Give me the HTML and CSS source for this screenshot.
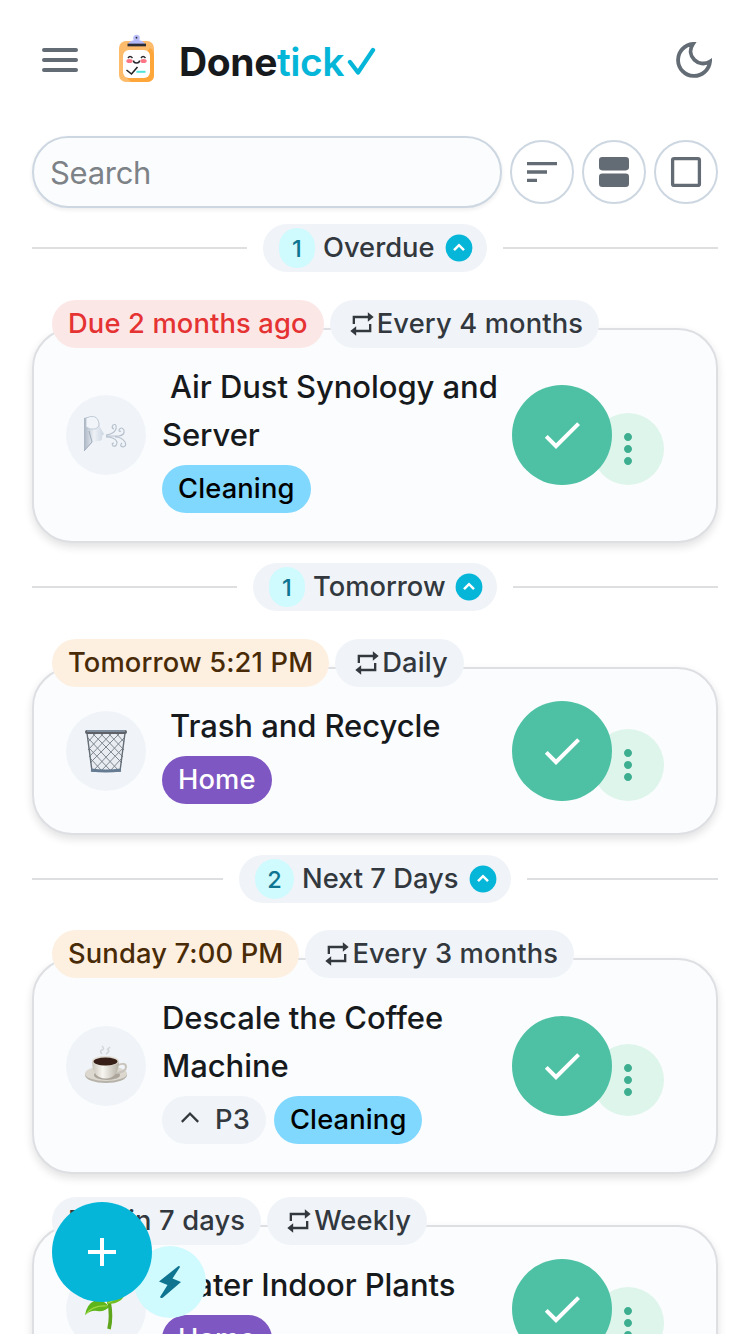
FILE: index.html
```html
<!DOCTYPE html>
<html lang="en">
<head>
<meta charset="utf-8">
<title>Donetick</title>
<link rel="stylesheet" href="styles.css">
</head>
<body>
<svg width="0" height="0" class="defs">
  <symbol id="repeat" viewBox="0 0 24 24"><path fill="currentColor" d="M6 7h11v3l5-4-5-4v3H4v7h2zM18 17H7v-3l-5 4 5 4v-3h13v-7h-2z"/></symbol>
  <symbol id="check" viewBox="0 0 24 24"><path fill="currentColor" d="M9 16.17 4.83 12l-1.42 1.41L9 19 21 7l-1.41-1.41z"/></symbol>
  <symbol id="up" viewBox="0 0 24 24"><path fill="currentColor" d="m12 8-6 6 1.100 1.100L12 10.200l4.900 4.900L18 14z"/></symbol>
  <symbol id="dots" viewBox="0 0 24 24"><path fill="currentColor" d="M12 8c1.1 0 2-.9 2-2s-.9-2-2-2-2 .9-2 2 .9 2 2 2m0 2c-1.1 0-2 .9-2 2s.9 2 2 2 2-.9 2-2-.9-2-2-2m0 6c-1.1 0-2 .9-2 2s.9 2 2 2 2-.9 2-2-.9-2-2-2"/></symbol>
  <symbol id="collapse" viewBox="0 0 28 28"><circle cx="14" cy="14" r="13.4" fill="#06b6d8"/><path d="m9 16.2 5-5 5 5" fill="none" stroke="#fff" stroke-width="2.5"/></symbol>
</svg>

<header class="topbar">
  <svg class="menu" viewBox="0 0 36 26"><path d="M2 3h32M2 13h32M2 23h32" stroke="#636b74" stroke-width="4" stroke-linecap="round"/></svg>
  <svg class="logo" viewBox="0 0 40 50">
    <rect x="2" y="7" width="35" height="41" rx="7" fill="#fdbb6c"/>
    <path d="M33 14q4 2 4 8v19q0 7-7 7H14l-4-4z" fill="#ffa63a"/>
    <rect x="6" y="16" width="27" height="28" rx="6" fill="#fff"/>
    <circle cx="19.500" cy="4" r="2.200" fill="none" stroke="#b9bdf9" stroke-width="2.200"/><circle cx="19.500" cy="3.800" r="1" fill="#222640"/>
    <path d="M11 10q2-4 8.500-4t8.500 4z" fill="#b4b9fa"/><path d="M10.500 11h18.500" stroke="#2c2c34" stroke-width="2.700"/>
    <ellipse cx="12.500" cy="27" rx="3.200" ry="2" fill="#fb7584"/><ellipse cx="26.500" cy="27" rx="3.200" ry="2" fill="#fb7584"/>
    <path d="M11 24q2-3 4.500 0M24 24q2-3 4.500 0M16.500 26.500q0 2.500 3 2.500t3-2.500" fill="none" stroke="#26262c" stroke-width="1.400"/>
    <path d="m9.500 36 5 4 6-7" fill="none" stroke="#222" stroke-width="1.600"/><path d="M19.500 37.800h9" stroke="#4ee4dc" stroke-width="2"/>
  </svg>
  <div class="brand">Done<span>tick</span></div>
  <svg class="brandcheck" viewBox="0 0 30 30"><path d="m3 16 8 10.500L26 4" fill="none" stroke="#06b6d8" stroke-width="4.300" stroke-linecap="round" stroke-linejoin="round"/></svg>
  <svg class="moon" viewBox="0 0 36 36"><path d="M17 2A16 16 0 1 0 34 19.500C23 26.500 9 14 17 2Z" fill="none" stroke="#636b74" stroke-width="3.800"/></svg>
</header>

<div class="toolbar">
  <div class="search">Search</div>
  <button class="tool"><svg viewBox="0 0 40 40"><path fill="#636b74" d="M5 10h30v3.300H5zm0 8.300h20v3.400H5zm0 8.400h10V30H5z"/></svg></button>
  <button class="tool"><svg viewBox="0 0 40 40"><rect x="5" y="5" width="30" height="13.400" rx="3.300" fill="#636b74"/><rect x="5" y="21.600" width="30" height="13.400" rx="3.300" fill="#636b74"/></svg></button>
  <button class="tool"><svg viewBox="0 0 40 40"><rect x="6.600" y="6.600" width="26.800" height="26.800" rx="1.500" fill="none" stroke="#636b74" stroke-width="3.300"/></svg></button>
</div>

<main>
  <div class="divider"><div class="group g1"><b>1</b><span>Overdue</span><svg><use href="#collapse"/></svg></div></div>
  <section class="task first">
    <div class="chips"><div class="chip late">Due 2 months ago</div><div class="chip"><svg><use href="#repeat"/></svg>Every 4 months</div></div>
    <article class="card">
      <div class="avatar"><svg viewBox="0 0 44 44">
        <defs><linearGradient id="face"><stop stop-color="#aab5c3"/><stop offset=".5" stop-color="#eef2f7"/><stop offset="1" stop-color="#ccd5e0"/></linearGradient></defs>
        <path d="M0 5q10-3 14 2 2 3 2 7l4 7-2 2q1 5-3 5-5 0-7 2l-8 8z" fill="url(#face)"/>
        <path d="M2 5q9-4 12 2 3 7-3 9-5 1-9-2z" fill="#f1f4f9" stroke="#b5c0cd" stroke-width=".8"/><path d="m0 38 8-9-3-11" fill="none" stroke="#a0abba" stroke-width="1"/>
        <g fill="none" stroke="#b7c1cd" stroke-width="1.200"><path d="M22 22q8-1 10-6 1-6-3-4-2 3 1 4M22 23h13q6-1 5-6-3-4-5 0 0 2 2 1M22 24q9 0 11 5 0 5-4 4-2-3 1-3M31 24q7 0 10 5 2 4-2 5-4-1-1-4"/></g>
      </svg></div>
      <div class="body"><h2 class="indent">Air Dust Synology and Server</h2><div class="tags"><span class="tag cleaning">Cleaning</span></div></div>
      <div class="actions"><button class="done"><svg><use href="#check"/></svg></button><button class="more"><svg><use href="#dots"/></svg></button></div>
    </article>
  </section>

  <div class="divider"><div class="group g2"><b>1</b><span>Tomorrow</span><svg><use href="#collapse"/></svg></div></div>
  <section class="task short">
    <div class="chips"><div class="chip soon">Tomorrow 5:21 PM</div><div class="chip"><svg><use href="#repeat"/></svg>Daily</div></div>
    <article class="card">
      <div class="avatar"><svg viewBox="0 0 44 44">
        <path d="M3 3h38l-5 39H8z" fill="#e9edf2"/>
        <g fill="none" stroke="#7d858e" stroke-width="1"><path d="m4 9 31 33M5 19l22 23M6 29l12 13M8 4l30 30M16 4l23 24M24 4l16 17M32 4l8 9M40 9 9 42M39 19 17 42M38 29 26 42M36 4 6 34M28 4 5 28M20 4 4 21M12 4 4 13"/></g>
        <path d="M3 4 8 42h28l5-38" fill="none" stroke="#656d76" stroke-width="1.400"/><path d="M7 41q15 2 30 0" stroke="#657b92" stroke-width="3" fill="none"/>
        <rect x="1" y="1" width="42" height="4" rx="2" fill="#5e6268"/><path d="M3 2h38" stroke="#9fb7d0"/>
      </svg></div>
      <div class="body"><h2 class="indent">Trash and Recycle</h2><div class="tags"><span class="tag home">Home</span></div></div>
      <div class="actions"><button class="done"><svg><use href="#check"/></svg></button><button class="more"><svg><use href="#dots"/></svg></button></div>
    </article>
  </section>

  <div class="divider"><div class="group g3"><b>2</b><span>Next 7 Days</span><svg><use href="#collapse"/></svg></div></div>
  <section class="task week">
    <div class="chips"><div class="chip soon">Sunday 7:00 PM</div><div class="chip"><svg><use href="#repeat"/></svg>Every 3 months</div></div>
    <article class="card">
      <div class="avatar"><svg viewBox="0 0 44 44">
        <defs><linearGradient id="cup"><stop stop-color="#c9c4ba"/><stop offset=".4" stop-color="#f8f6f1"/><stop offset="1" stop-color="#b6b0a5"/></linearGradient></defs>
        <ellipse cx="22" cy="31" rx="21" ry="8" fill="#b7b2a9"/><ellipse cx="22" cy="29.500" rx="21" ry="7.500" fill="#dcd8d0"/><ellipse cx="23" cy="31" rx="13" ry="5" fill="#aaa49a"/>
        <path d="M34 21q8-3 8 2 0 5-10 6" fill="none" stroke="#c9c4bb" stroke-width="2"/>
        <path d="M8 17q0 12 7 16 7 3 13 0 7-4 7-16z" fill="url(#cup)"/><ellipse cx="21.500" cy="17" rx="13.500" ry="5" fill="#e3ded5"/><ellipse cx="21.500" cy="17.500" rx="12" ry="4" fill="#382018"/>
        <path d="M18 10q-3-3 0-4t0-4M22 10q5-3 1-5M24 5l2-2" fill="none" stroke="#d4d7da" stroke-width="1.600"/>
      </svg></div>
      <div class="body"><h2>Descale the Coffee Machine</h2><div class="tags"><span class="tag prio"><svg><use href="#up"/></svg>P3</span><span class="tag cleaning">Cleaning</span></div></div>
      <div class="actions"><button class="done"><svg><use href="#check"/></svg></button><button class="more"><svg><use href="#dots"/></svg></button></div>
    </article>
  </section>

  <section class="task last">
    <div class="chips"><div class="chip">Due in 7 days</div><div class="chip"><svg><use href="#repeat"/></svg>Weekly</div></div>
    <article class="card">
      <div class="avatar"><svg viewBox="0 0 44 44">
        <path d="M25 42q3-12 0-28" fill="none" stroke="#5ea51c" stroke-width="3.600"/>
        <path d="M25 20Q19 11 10 14 3 17 1 28q6-5 12-4 8 1 12-4z" fill="#5fb51c"/><path d="M2 27q7-9 21-8" fill="none" stroke="#9dd845" stroke-width="1.200"/>
        <path d="M23 17q1-12 19-14-2 14-19 14z" fill="#6fbf20"/><path d="M24 16q9-3 17-12" fill="none" stroke="#a8df4c"/>
      </svg></div>
      <div class="body"><h2>Water Indoor Plants</h2><div class="tags"><span class="tag home">Home</span></div></div>
      <div class="actions"><button class="done"><svg><use href="#check"/></svg></button><button class="more"><svg><use href="#dots"/></svg></button></div>
    </article>
  </section>
</main>

<div class="fabs">
  <button class="add"><svg viewBox="0 0 28 28"><path d="M14 0v28M0 14h28" stroke="#fff" stroke-width="4"/></svg></button>
  <button class="quick"><svg viewBox="0 0 22 32"><path d="M19.500 0 0 15.500l8.500 3.500L1 31q1 2 3 .5L22 16l-8.500-3.500L21 1q0-1-1.500-1z" fill="#0e7490"/></svg></button>
</div>
</body>
</html>
```
FILE: styles.css
```css
* { box-sizing: border-box; }
body { margin: 0; height: 1334px; overflow: hidden; background: #fff; color: #171a1c; font: 500 27.3px/42px Inter, sans-serif; position: relative; }
button { border: 0; padding: 0; font: inherit; display: flex; align-items: center; justify-content: center; }
svg { display: block; flex: none; }
.defs { position: absolute; }

.topbar { height: 120px; padding: 0 38px 0 42px; display: flex; align-items: center; }
.menu { width: 36px; height: 26px; }
.logo { width: 40px; height: 50px; margin: 0 0 3px 39px; }
.brand { width: 168px; margin: 3px 0 0 22px; font-size: 39px; line-height: 60px; font-weight: 700; letter-spacing: -0.4px; white-space: nowrap; }
.brand span { color: #06b6d8; font-weight: 600; letter-spacing: -0.5px; }
.brandcheck { width: 30px; height: 30px; margin: 2px 0 0 0; }
.moon { width: 36px; height: 36px; margin-left: auto; }

.toolbar { display: flex; align-items: center; gap: 8px; padding: 16px 32px 0; }
.search { width: 470px; height: 72px; padding: 0 16px; border: 2px solid #cdd7e1; border-radius: 36px; background: #fbfcfe; box-shadow: 0 2px 4px rgba(21, 21, 21, .08); color: #7d8287; font-size: 31px; line-height: 70px; font-weight: 400; letter-spacing: -0.3px; }
.tool { width: 64px; height: 64px; border: 2px solid #cdd7e1; border-radius: 50%; background: #fff; }
.tool svg { width: 40px; height: 40px; }

main { padding: 16px 32px 0; }
.divider { display: flex; align-items: center; gap: 16px; height: 48px; }
.divider::before, .divider::after { content: ""; flex: 1; height: 2px; background: #dedfe1; }
.group { display: flex; align-items: center; height: 48px; padding: 0 14px 0 16px; border-radius: 24px; background: #f0f4f8; color: #32383e; }
.g1 { width: 224px; }
.g2 { width: 244px; }
.g3 { width: 272px; }
.group b { width: 36px; height: 40px; border-radius: 20px; background: #cffafe; color: #0e7490; font-size: 23.500px; line-height: 41px; font-weight: 500; text-align: center; }
.g3 b { width: 39px; }
.group span { margin-left: 8px; }
.group svg { width: 28px; height: 28px; margin-left: auto; }

.task { padding: 28px 0 20px; }
.week { padding: 27px 0 24px; }
.last { padding-top: 0; }
.chips { display: flex; gap: 6px; height: 28px; padding-left: 20px; position: relative; z-index: 1; }
.chip, .tag { display: flex; align-items: center; height: 48px; padding: 0 16px; border-radius: 24px; white-space: nowrap; background: #f0f4f8; color: #32383e; letter-spacing: 0.15px; }
.chip { flex: none; }
.chip svg { width: 28px; height: 28px; margin: 0 1px 0 2px; }
.late { background: #fce7e7; color: #e53232; }
.soon { background: #fdf0e1; color: #492b08; }
.card { display: flex; align-items: center; padding: 34px 52px 28px 32px; border: 2px solid #dddfe3; border-radius: 40px; background: #fbfcfe; box-shadow: 0 4px 8px rgba(21, 21, 21, .13); }
.first .card { padding-top: 33px; }
.avatar { width: 80px; height: 80px; margin-bottom: 6px; border-radius: 50%; background: #f0f4f8; display: flex; align-items: center; justify-content: center; }
.avatar svg { width: 44px; height: 44px; }
.body { width: 350px; margin-left: 16px; }
.short .body { margin-top: -1px; margin-bottom: 1px; }
.week .card { padding-bottom: 28px; }
.week { padding-bottom: 23px; }
h2 { margin: 0; font-size: 31px; line-height: 48px; font-weight: 500; letter-spacing: -0.07px; }
.indent { text-indent: 8px; }
.last h2 { text-indent: 4px; }
.tags { display: flex; gap: 8px; margin-top: 6px; }
.cleaning { background: #80d8ff; color: #000; }
.home { background: #7e57c2; color: #fff; }
.prio svg { width: 36px; height: 36px; margin: -4px 7px 0 -6px; }
.actions { display: flex; align-items: flex-end; height: 100px; margin: -4px 0 2px; }
.done { width: 100px; height: 100px; border-radius: 50%; background: #4ec1a4; color: #fff; z-index: 1; }
.done svg { width: 48px; height: 48px; }
.more { width: 72px; height: 72px; margin-left: -20px; border-radius: 50%; background: #def5eb; color: #3dae90; }
.more svg { width: 48px; height: 48px; }

.fabs { position: absolute; left: 52px; top: 1202px; z-index: 3; display: flex; align-items: flex-end; }
.add { width: 100px; height: 100px; border-radius: 50%; background: #06b6d8; z-index: 1; }
.add svg { width: 28px; height: 28px; }
.quick { width: 72px; height: 72px; margin: 0 0 -16px -18px; border-radius: 50%; background: #cffafe; }
.quick svg { width: 22px; height: 32px; }
```
